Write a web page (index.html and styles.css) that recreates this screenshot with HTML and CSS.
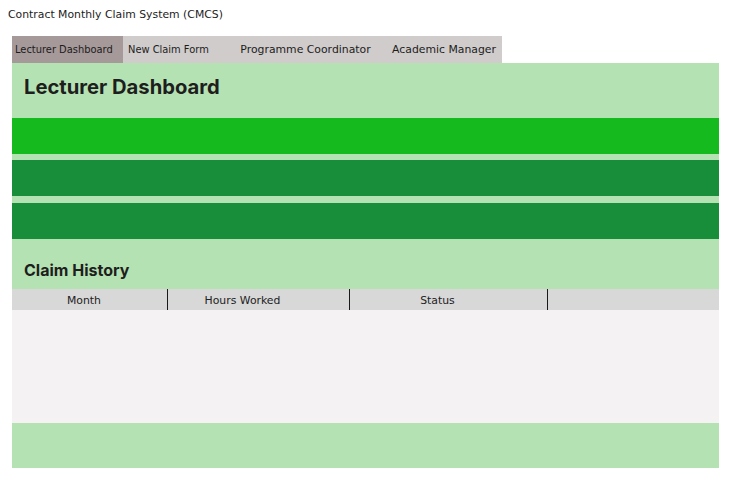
FILE: index.html
```html
<!DOCTYPE html>
<html>
<head>
<meta charset="utf-8">
<link rel="stylesheet" href="styles.css">
</head>
<body>
<div class="app-title">Contract Monthly Claim System (CMCS)</div>
<div class="wrap">
  <nav class="tabs">
    <div class="tab tab-active tab-1">Lecturer Dashboard</div>
    <div class="tab tab-2">New Claim Form</div>
    <div class="tab tab-3">Programme Coordinator</div>
    <div class="tab tab-4">Academic Manager</div>
  </nav>
  <main class="panel">
    <h1 class="heading">Lecturer Dashboard</h1>
    <div class="bar bar-bright"></div>
    <div class="bar bar-dark"></div>
    <div class="bar bar-dark"></div>
    <h2 class="subheading">Claim History</h2>
    <div class="table">
      <div class="thead">
        <div class="th th-month">Month</div>
        <div class="th th-hours">Hours Worked</div>
        <div class="th th-status">Status</div>
        <div class="th th-extra"></div>
      </div>
      <div class="tbody"></div>
    </div>
    <div class="panel-foot"></div>
  </main>
</div>
</body>
</html>
```
FILE: styles.css
```css
html, body {
  margin: 0;
  padding: 0;
  background: #ffffff;
}
body {
  padding: 8px;
  font-family: "DejaVu Sans", Verdana, sans-serif;
  color: #1c1c1c;
}
.app-title {
  font-size: 10.85px;
  line-height: 13px;
  height: 28px;
}
.wrap {
  padding: 0 6px 0 4px;
}
.tabs {
  display: flex;
  height: 27px;
}
.tab {
  background: #d0cccb;
  font-size: 9.9px;
  line-height: 28px;
  color: #1c1c1c;
  white-space: nowrap;
}
.tab-active {
  background: #a69999;
}
.tab-1 { width: 108px; padding-left: 3px; }
.tab-2 { width: 97px; padding-left: 5px; }
.tab-3 { width: 161px; text-align: center; font-size: 10.85px; }
.tab-4 { width: 116px; text-align: center; font-size: 10.85px; }
.panel {
  background: #b5e2b2;
  display: flex;
  flex-direction: column;
}
.heading {
  margin: 0;
  font-family: Inter, "Liberation Sans", sans-serif;
  font-weight: 700;
  font-size: 20.2px;
  line-height: 24px;
  padding: 12px 12px 19px;
  color: #1e1e1e;
}
.bar {
  height: 36px;
}
.bar-bright {
  background: #15ba1f;
  margin-bottom: 6px;
}
.bar-dark {
  background: #188d3a;
}
.bar-dark + .bar-dark {
  margin-top: 7px;
}
.subheading {
  margin: 0;
  font-family: Inter, "Liberation Sans", sans-serif;
  font-weight: 700;
  font-size: 16px;
  line-height: 20px;
  padding: 21px 12px 9px;
  color: #1e1e1e;
}
.thead {
  display: grid;
  grid-template-columns: 155px 182px 198px 1fr;
  background: #d8d8d8;
  height: 21px;
}
.th {
  font-size: 10.85px;
  line-height: 19px;
  padding-top: 2px;
  text-align: center;
  color: #222;
  white-space: nowrap;
}
.th + .th {
  border-left: 1px solid #1a1a1a;
}
.th-month { padding-right: 11px; }
.th-hours { padding-right: 32px; }
.th-status { padding-right: 22px; }
.tbody {
  height: 113px;
  background: #f4f2f3;
}
.panel-foot {
  height: 45px;
}
```
